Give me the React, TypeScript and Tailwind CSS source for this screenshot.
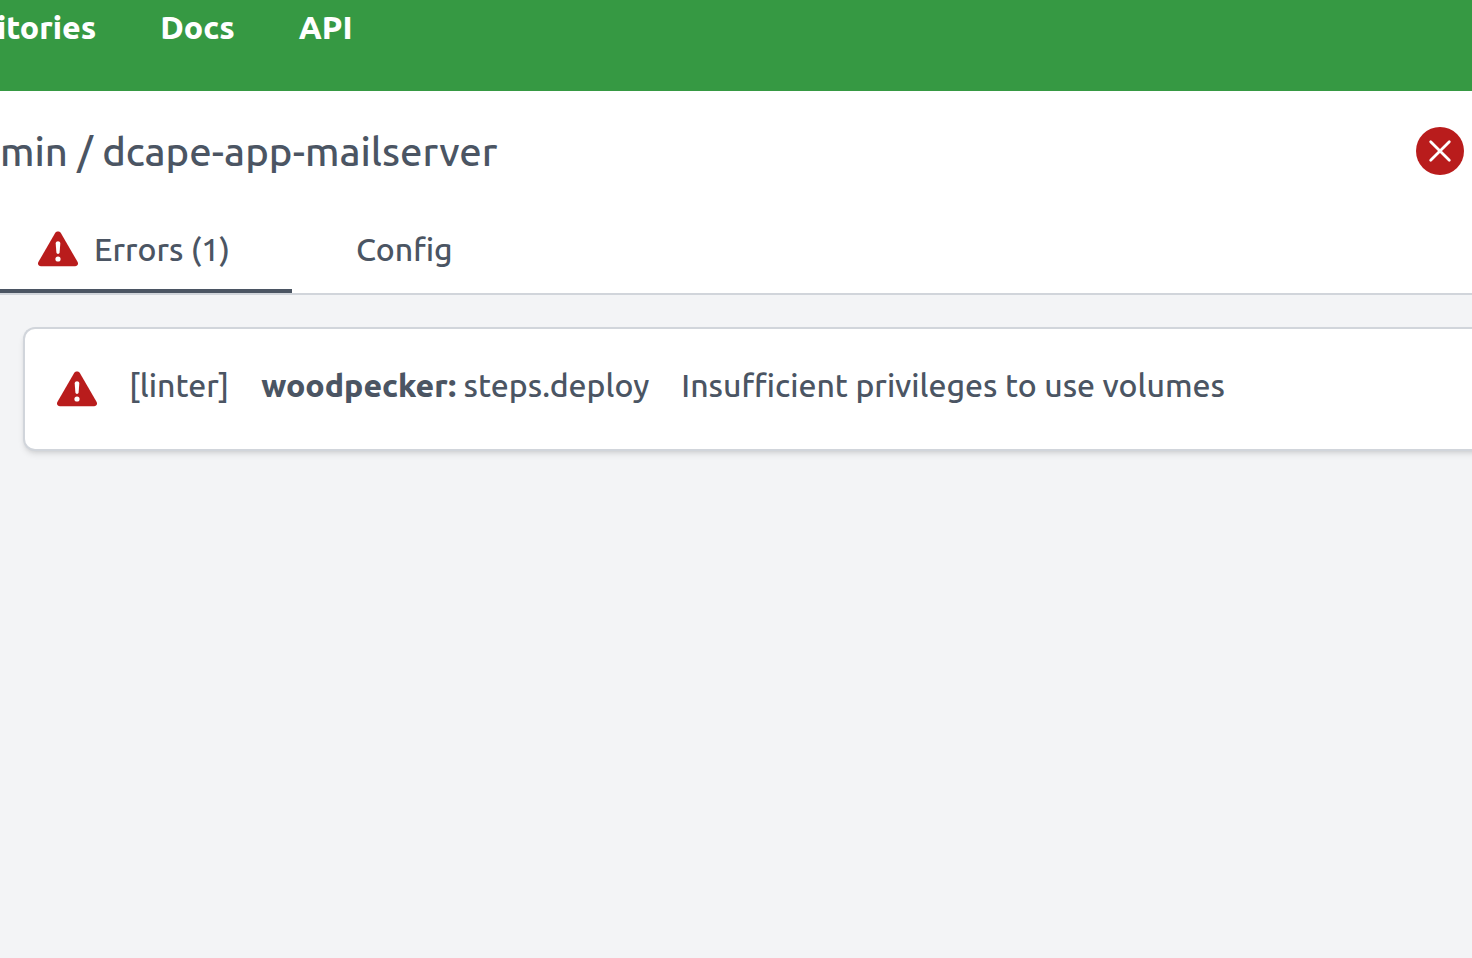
import React from 'react';

function WarningIcon() {
  return (
    <svg viewBox="0 0 40 36" className="size-10 shrink-0 text-[#b91c1c]" fill="currentColor" aria-hidden="true">
      <path d="M17.3 1.8C18.5-.1 21.5-.1 22.7 1.8L39.5 30.8C40.8 33.2 39.6 35.2 37 35.2H3C.4 35.2-.8 33.2.5 30.8Z" />
      <path fill="#fff" d="M17.7 12.4C17.7 9.6 22.3 9.6 22.3 12.4L21.6 21.6C21.4 23.3 18.6 23.3 18.4 21.6Z" />
      <circle cx="20" cy="28" r="2.6" fill="#fff" />
    </svg>
  );
}

function FailureIcon() {
  return (
    <svg viewBox="0 0 48 48" className="size-12 shrink-0" role="img" aria-label="Failure">
      <circle cx="24" cy="24" r="24" fill="#b91c1c" />
      <path d="M14.7 14.7 33.3 33.3M33.3 14.7 14.7 33.3" stroke="#fff" strokeWidth="2.8" strokeLinecap="round" />
    </svg>
  );
}

export default function App() {
  return (
    <div className="flex min-h-screen flex-col overflow-hidden bg-[#f3f4f6] font-['Ubuntu','Noto_Sans',sans-serif] text-[32px] leading-10 font-medium text-[#4b5563]">
      <nav className="-ml-[3px] flex h-[91px] items-start gap-16 bg-[#369943] pt-[7px] font-extrabold text-white">
        <a href="#repositories">itories</a>
        <a href="#docs">Docs</a>
        <a href="#api">API</a>
      </nav>
      <header className="border-b-2 border-[#d1d5db] bg-white">
        <div className="flex items-start justify-between pt-9 pr-2">
          <h1 className="text-[40px] leading-[50px]">min / dcape-app-mailserver</h1>
          <FailureIcon />
        </div>
        <div role="tablist" className="mt-[52px] flex">
          <button role="tab" aria-selected="true" className="flex w-[292px] items-center gap-4 border-b-4 border-[#4b5563] pb-5 pl-[38px]">
            <WarningIcon />
            <span>Errors (1)</span>
          </button>
          <button role="tab" aria-selected="false" className="border-b-4 border-transparent px-16 pb-5">
            Config
          </button>
        </div>
      </header>
      <main className="pt-8 pl-[23px]">
        <section className="-mr-4 flex items-start gap-8 rounded-l-xl border-2 border-r-0 border-[#d1d5db] bg-white px-8 py-10 leading-8 shadow-md">
          <WarningIcon />
          <span>[linter]</span>
          <span><strong className="font-extrabold">woodpecker:</strong> steps.deploy</span>
          <span>Insufficient privileges to use volumes</span>
        </section>
      </main>
    </div>
  );
}
